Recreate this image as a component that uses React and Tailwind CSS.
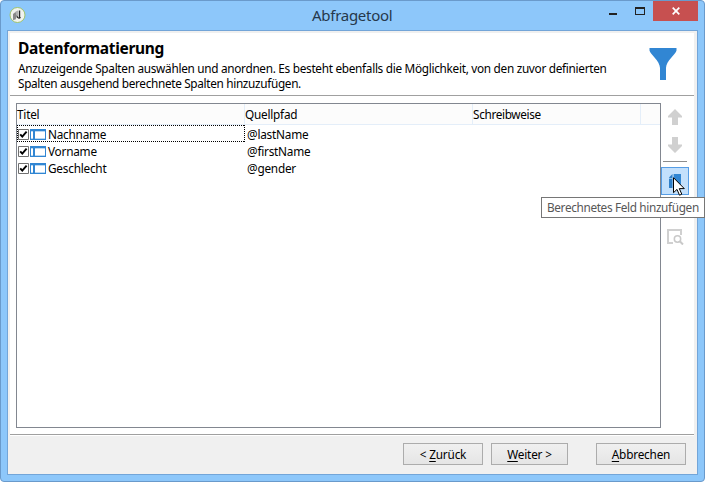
const rows = [
  { title: "Nachname", path: "@lastName" },
  { title: "Vorname", path: "@firstName" },
  { title: "Geschlecht", path: "@gender" },
];

function AppIcon() {
  return (
    <svg className="mt-[6px] ml-[8px] size-[17px] shrink-0" viewBox="0 0 17 17">
      <circle cx="8.500" cy="8" r="7.500" fill="#f1f3ee" stroke="#9fc36a" />
      <path d="M4 7l2.500-2 1 1V10l-1 2.500-2.500.5z" fill="#888" />
      <path d="M6.500 4.500L9 3.500v4L7.500 9z" fill="#b0b0b0" />
      <path d="M10.500 3.500V11" fill="none" stroke="#252525" strokeWidth="1.400" />
      <path d="M8 8.500c0 3 2.500 3 3.500 1.800" fill="none" stroke="#252525" strokeWidth="1.100" />
    </svg>
  );
}

function TitleBar() {
  return (
    <div className="relative flex h-[29px] justify-between">
      <AppIcon />
      <div className="absolute top-[4px] left-[311px] text-[15px] leading-[20px] tracking-[-0.28px] text-[#26384b]">Abfragetool</div>
      <div className="mr-[6px] flex">
        <svg className="h-[20px] w-[45px]" viewBox="0 0 45 20" shapeRendering="crispEdges">
          <path d="M1 12h8v2H1z" fill="#222" />
          <path d="M27 6h10v8H27zM28 8v5h8V8z" fill="#222" fillRule="evenodd" />
        </svg>
        <div className="flex h-[20px] w-[45px] items-center justify-center bg-[#c75050]">
          <svg className="size-[8px]" viewBox="0 0 8 8">
            <path d="M.7.7l6.600 6.600M7.300.7L.7 7.300" stroke="#fff" strokeWidth="1.700" />
          </svg>
        </div>
      </div>
    </div>
  );
}

function Header() {
  return (
    <header className="flex h-[63px] shrink-0 justify-between border-b border-[#a0a0a0]">
      <div className="pt-[4px] pl-[8px]">
        <h1 className="text-[15.5px] leading-[22px] font-bold tracking-[-0.3px] whitespace-nowrap">Datenformatierung</h1>
        <p className="mt-[2px] flex flex-col text-[11.8px] leading-[15px] whitespace-nowrap">
          <span className="tracking-[-0.3px]">Anzuzeigende Spalten auswählen und anordnen. Es besteht ebenfalls die Möglichkeit, von den zuvor definierten</span>
          <span className="tracking-[-0.33px]">Spalten ausgehend berechnete Spalten hinzuzufügen.</span>
        </p>
      </div>
      <svg className="mt-[15px] mr-[17px] h-[32px] w-[28px]" viewBox="0 0 28 32">
        <path d="M.5 0h27v2.500C27 6 17 13 17 20v12h-6V20C11 13 1 6 .5 2.500z" fill="#3186d3" />
      </svg>
    </header>
  );
}

function Checkbox() {
  return (
    <svg className="size-[11px]" viewBox="0 0 11 11">
      <path d="M.5.5h10v10H.5z" fill="#fff" stroke="#707070" />
      <path d="M2.200 5.300l2.100 2.300 4.300-5" fill="none" stroke="#000" strokeWidth="1.900" />
    </svg>
  );
}

function FieldIcon() {
  return (
    <svg className="ml-px h-[11px] w-[16px]" viewBox="0 0 16 11" shapeRendering="crispEdges">
      <path d="M0 0h16v11H0z" fill="#3186d3" />
      <path d="M1 2h2v8H1zM5 2h10v8H5z" fill="#fff" />
      <path d="M1 2h2v1H1zM5 2h10v1H5zM1 9h2v1H1zM5 9h10v1H5z" fill="#b9d8f2" />
    </svg>
  );
}

function ColumnList() {
  return (
    <div className="h-[325px] w-[645px] border border-[#828790] text-[11.8px] leading-[17px] tracking-[-0.23px] whitespace-nowrap">
      <div className="flex h-[21px] border-b border-[#e4eef9] bg-[#fcfcfc] leading-[21px]">
        <div className="w-[228px] border-r border-[#e4eef9]">Titel</div>
        <div className="w-[228px] border-r border-[#e4eef9]">Quellpfad</div>
        <div className="w-[168px] border-r border-[#e4eef9] tracking-[-0.35px]">Schreibweise</div>
      </div>
      {rows.map((row, i) => (
        <div key={row.title} className="flex h-[17px]">
          <div className="relative flex w-[228px] items-center pt-px pl-px">
            {i === 0 && (
              <svg className="absolute inset-0 h-[17px] w-[228px]" viewBox="0 0 228 17" shapeRendering="crispEdges">
                <path d="M0 .5h228M0 16.500h228M.5 0v17M227.500 0v17" stroke="#000" strokeDasharray="1 1" />
              </svg>
            )}
            <Checkbox />
            <FieldIcon />
            <span className="ml-[2px]">{row.title}</span>
          </div>
          <div className="flex items-center pt-px pl-[2px]">{row.path}</div>
        </div>
      ))}
    </div>
  );
}

function Toolbar() {
  return (
    <div className="relative flex w-[28px] flex-col items-center pt-[6px]">
      <svg className="h-[16px] w-[14px]" viewBox="0 0 14 16">
        <path d="M7 0l7 7v1.500h-4V16H4V8.500H0V7z" fill="#d0d0d0" />
      </svg>
      <svg className="mt-[12px] h-[16px] w-[14px]" viewBox="0 0 14 16">
        <path d="M7 16l7-7V7.500h-4V0H4v7.500H0V9z" fill="#d0d0d0" />
      </svg>
      <div className="mt-[8px] h-px w-[24px] bg-[#8c8c8c]" />
      <div className="mt-[5px] size-[28px] border border-[#569de5] bg-[#c3e0fc]">
        <svg className="size-[26px]" viewBox="0 0 26 26">
          <path d="M7 9.500L10.500 6v14H7z" fill="#2f7fc8" />
          <path d="M12 6h7v14h-7z" fill="#3186d3" />
          <path d="M7 10.500h4.500V6" fill="none" stroke="#90bfea" />
        </svg>
      </div>
      <svg className="mt-[34px] ml-px h-[16px] w-[17px]" viewBox="0 0 17 16">
        <path d="M6 14H1V1h13v5" fill="none" stroke="#d0d0d0" strokeWidth="2" />
        <circle cx="10.500" cy="10" r="3.200" fill="#fff" stroke="#c9c9c9" strokeWidth="1.500" />
        <path d="M12.800 12.300L16 15.500" stroke="#c9c9c9" strokeWidth="2" />
      </svg>
      <div className="absolute top-[94px] right-[-16px] z-10 h-[21px] w-[164px] border border-[#767676] bg-white pl-[5px] text-[11.8px] leading-[19px] tracking-[-0.35px] whitespace-nowrap text-[#575757]">
        Berechnetes Feld hinzufügen
      </div>
      <svg className="absolute top-[74px] left-[12px] z-20 h-[19px] w-[12px]" viewBox="0 0 12 19">
        <path d="M.5.7v15l3.500-3.300 2.500 5.800 2.300-1-2.500-5.600h5z" fill="#fff" stroke="#000" />
      </svg>
    </div>
  );
}

function DialogButton({ className, before = "", hotkey, children }) {
  return (
    <button className={"h-[22px] shrink-0 border border-[#acacac] bg-linear-to-b from-[#f0f0f0] to-[#e5e5e5] text-[11.8px] leading-[19px] tracking-[-0.2px] whitespace-nowrap " + className}>
      {before}
      <span className="underline underline-offset-2">{hotkey}</span>
      {children}
    </button>
  );
}

export default function App() {
  return (
    <main className="h-[492px] w-[711px] overflow-hidden bg-white font-['Noto_Sans','Open_Sans',sans-serif] text-black">
      <div className="flex h-[482px] w-[705px] flex-col rounded-[4px] border border-[#6a9acb] bg-[#8dc7fa]">
        <TitleBar />
        <div className="mx-[6px] flex h-[445px] flex-col border border-[#73a5d8] bg-[#f0f0f0] px-[2px] pt-[2px]">
          <div className="mr-px flex h-[403px] shrink-0 flex-col bg-white">
            <Header />
            <div className="flex h-[339px] shrink-0 border-b border-[#a0a0a0] pt-[7px] pl-[6px]">
              <ColumnList />
              <Toolbar />
            </div>
          </div>
          <footer className="flex justify-end pt-[7px] pr-[9px]">
            <DialogButton className="w-[80px]" before="< " hotkey="Z">urück</DialogButton>
            <DialogButton className="ml-[8px] w-[77px]" hotkey="W">eiter &gt;</DialogButton>
            <DialogButton className="ml-[28px] w-[90px]" hotkey="A">bbrechen</DialogButton>
          </footer>
        </div>
      </div>
    </main>
  );
}
